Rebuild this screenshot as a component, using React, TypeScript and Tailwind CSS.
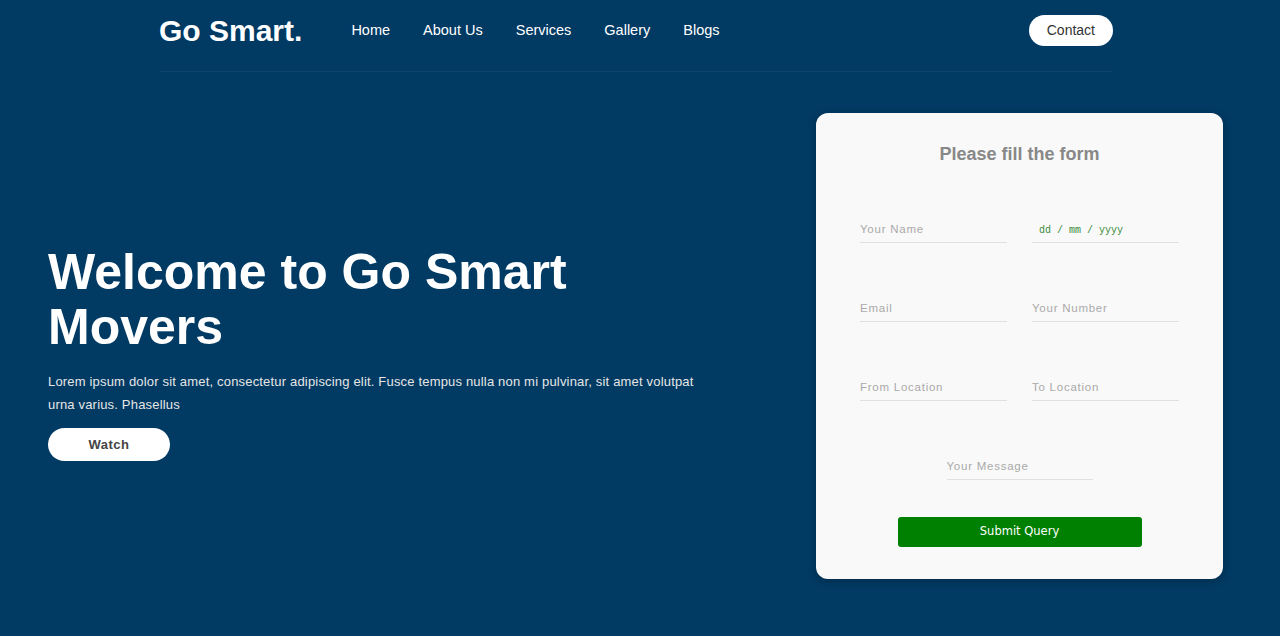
import React from 'react';

const navLinks = ['Home', 'About Us', 'Services', 'Gallery', 'Blogs'];

const inputCls =
  "w-full h-[28px] bg-transparent border-b border-[#e0e0e0] outline-none text-[11.5px] tracking-[0.75px] text-[#555] placeholder:text-[#aaa]";

const App = () => {
  return (
    <div className="min-h-screen bg-[#013a63] font-['Liberation_Sans',Arial,sans-serif]">
      <header className="ml-[159px] w-[954px] h-[72px] pb-[10px] flex items-center border-b border-[#0b436c]">
        <div className="text-[30px] font-bold text-white leading-none mr-[49px]">Go Smart.</div>
        <nav className="flex gap-[33px] text-[14.5px] text-white">
          {navLinks.map((l) => (
            <a key={l} href="#" className="leading-none">
              {l}
            </a>
          ))}
        </nav>
        <button className="ml-auto h-[31px] px-[18px] rounded-full bg-white text-[14px] text-[#333]">
          Contact
        </button>
      </header>

      <main className="flex">
        <section className="pl-[48px] w-[720px] mt-[173px]">
          <h1 className="w-[660px] text-[50px] leading-[55px] font-bold text-white">
            Welcome to Go Smart Movers
          </h1>
          <p className="w-[660px] mt-[15px] text-[13px] leading-[23px] tracking-[0.18px] text-[#e6e6e6]">
            Lorem ipsum dolor sit amet, consectetur adipiscing elit. Fusce tempus nulla non mi pulvinar, sit amet volutpat urna varius. Phasellus
          </p>
          <button className="mt-[12px] w-[122px] h-[33px] rounded-full bg-white text-[13px] font-bold tracking-[0.5px] text-[#444]">
            Watch
          </button>
        </section>

        <form
          onSubmit={(e) => e.preventDefault()}
          className="ml-auto mr-[57px] mt-[41px] w-[407px] h-[466px] rounded-[12px] bg-[#f9f9f9] shadow-[0_2px_8px_rgba(0,0,0,0.25)] px-[44px] pt-[31px] flex flex-col"
        >
          <h2 className="text-center text-[18px] leading-[21px] font-bold text-[#888]">Please fill the form</h2>

          <div className="mt-[50px] grid grid-cols-2 gap-x-[25px] gap-y-[51px]">
            <input type="text" placeholder="Your Name" className={inputCls} />
            <div className="h-[28px] border-b border-[#e0e0e0] pl-[7px] pt-[3px] flex items-center font-['Liberation_Mono','Courier_New',monospace] text-[10px] text-[#3a8a3a]">
              dd / mm / yyyy
            </div>
            <input type="email" placeholder="Email" className={inputCls} />
            <input type="text" placeholder="Your Number" className={inputCls} />
            <input type="text" placeholder="From Location" className={inputCls} />
            <input type="text" placeholder="To Location" className={inputCls} />
          </div>

          <div className="mt-[51px] flex justify-center">
            <input type="text" placeholder="Your Message" className={inputCls + " !w-[146px]"} />
          </div>

          <div className="mt-[37px] flex justify-center">
            <button
              type="submit"
              className="w-[244px] h-[30px] rounded-[3px] bg-[#008000] text-white text-[11.5px] font-['DejaVu_Sans',sans-serif]"
            >
              Submit Query
            </button>
          </div>
        </form>
      </main>
    </div>
  );
};

export default App;
